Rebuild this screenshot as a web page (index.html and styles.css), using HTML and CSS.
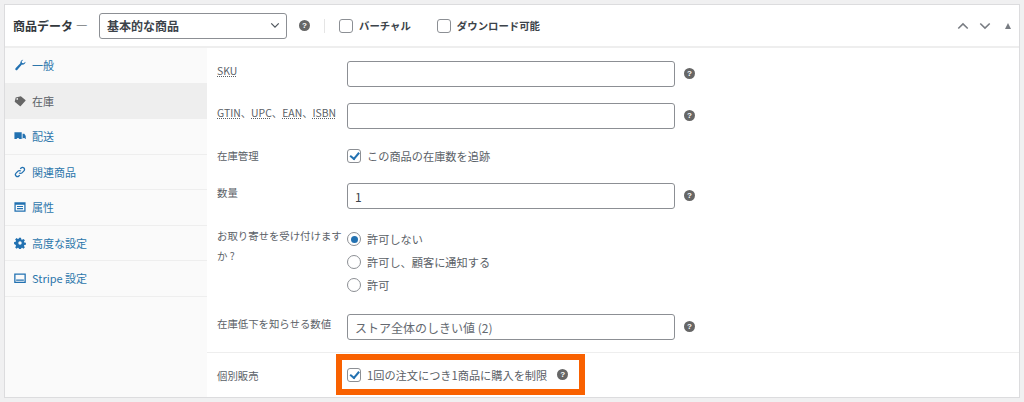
FILE: index.html
```html
<!DOCTYPE html>
<html lang="ja">
  <head>
    <meta charset="UTF-8" />
    <meta name="viewport" content="width=device-width, initial-scale=1.0" />
    <title>商品データ</title>
    <link rel="stylesheet" href="styles.css">
  </head>
  <body>
    <div class="card">
      <div class="card-header">
        <span class="card-title">商品データ —</span>
        <div class="type-select">
          <span>基本的な商品</span>
          <svg class="select-arrow" viewBox="0 0 12 8"><path d="M1.5 1.5 6 6l4.5-4.5" /></svg>
        </div>
        <span class="help"></span>
        <span class="header-sep"></span>
        <label class="header-check"><span class="box"></span>バーチャル</label>
        <label class="header-check"><span class="box"></span>ダウンロード可能</label>
        <div class="header-tools">
          <svg class="tool" viewBox="0 0 14 9"><path d="M1.5 7.5 7 2l5.5 5.5" /></svg>
          <svg class="tool" viewBox="0 0 14 9"><path d="M1.5 1.5 7 7l5.5-5.5" /></svg>
          <span class="tool-triangle"></span>
        </div>
      </div>

      <div class="card-body">
        <ul class="tabs">
          <li>
            <svg class="tab-icon" viewBox="0 0 14 14"><path d="M13.500 3.200a3.500 3.500 0 0 1-4.300 3.300L4 12.600a1.300 1.300 0 0 1-2.200-1.800L7.400 5.100A3.500 3.500 0 0 1 10.800 1L8.900 3l.5 1.700 1.700.4z" /></svg>
            一般
          </li>
          <li class="active">
            <svg class="tab-icon" viewBox="0 0 14 14"><path fill-rule="evenodd" d="M8 1.500 13.300 5.700a.8.8 0 0 1 .1 1.100L7.900 12.800a.8.8 0 0 1-1.100.1L.8 8 2 2.800zM3.800 3.600a1 1 0 1 0 0 2 1 1 0 0 0 0-2z" /></svg>
            在庫
          </li>
          <li>
            <svg class="tab-icon" viewBox="0 0 14 14"><path d="M.5 2.500h8.500v8H6.200a1.700 1.700 0 0 0-3.200 0H.5zM10 4.500h2l1.700 2.500v3.500h-.6a1.700 1.700 0 0 0-3.100-.3z" /></svg>
            配送
          </li>
          <li>
            <svg class="tab-icon icon-line" viewBox="0 0 14 14"><path d="M6 8a2.300 2.300 0 0 0 3.300 0l2.300-2.300a2.300 2.300 0 0 0-3.300-3.300L7.300 3.400M8 6a2.300 2.300 0 0 0-3.300 0L2.400 8.300a2.300 2.300 0 0 0 3.300 3.300l1-1" /></svg>
            関連商品
          </li>
          <li>
            <svg class="tab-icon" viewBox="0 0 14 14"><path fill-rule="evenodd" d="M.5 1.500h13v11H.5zM2 4.500v6.500h10V4.500zm1.500 1.200h7v1.300h-7zm0 2.500h7v1.300h-7z" /></svg>
            属性
          </li>
          <li>
            <svg class="tab-icon" viewBox="0 0 14 14"><path fill-rule="evenodd" d="M5.800 1h2.400l.3 1.900 1 .4 1.500-1.100 1.700 1.700-1.100 1.500.4 1 1.900.3v2.400l-1.900.3-.4 1 1.100 1.500-1.700 1.700-1.500-1.100-1 .4-.3 1.900H5.800l-.3-1.900-1-.4-1.500 1.100-1.700-1.700 1.100-1.500-.4-1L.1 8.200V5.800l1.900-.3.4-1-1.100-1.500 1.700-1.700 1.500 1.100 1-.4zM7 5a2 2 0 1 0 0 4 2 2 0 0 0 0-4z" /></svg>
            高度な設定
          </li>
          <li>
            <svg class="tab-icon icon-line icon-stripe" viewBox="0 0 14 14"><path d="M1 2.500h12v9.500H1zM2.500 9.500h9" /></svg>
            Stripe 設定
          </li>
        </ul>

        <div class="panel">
          <div class="field field-sku">
            <span class="field-label"><abbr>SKU</abbr></span>
            <div class="text-input"></div>
            <span class="help"></span>
          </div>
          <div class="field field-gtin">
            <span class="field-label"><abbr>GTIN</abbr>、<abbr>UPC</abbr>、<abbr>EAN</abbr>、<abbr>ISBN</abbr></span>
            <div class="text-input"></div>
            <span class="help"></span>
          </div>
          <div class="field field-manage">
            <span class="field-label">在庫管理</span>
            <label class="option"><span class="box checked"></span>この商品の在庫数を追跡</label>
          </div>
          <div class="field field-qty">
            <span class="field-label">数量</span>
            <div class="text-input">1</div>
            <span class="help"></span>
          </div>
          <div class="field field-backorder">
            <span class="field-label">お取り寄せを受け付けますか ?</span>
            <div class="radio-list">
              <label class="option"><span class="radio selected"></span>許可しない</label>
              <label class="option"><span class="radio"></span>許可し、顧客に通知する</label>
              <label class="option"><span class="radio"></span>許可</label>
            </div>
          </div>
          <div class="field field-threshold">
            <span class="field-label">在庫低下を知らせる数値</span>
            <div class="text-input placeholder">ストア全体のしきい値 (2)</div>
            <span class="help"></span>
          </div>
          <div class="field field-sold">
            <span class="field-label">個別販売</span>
            <div class="highlight">
              <label class="option"><span class="box checked"></span>1回の注文につき1商品に購入を制限</label>
              <span class="help"></span>
            </div>
          </div>
        </div>
      </div>
    </div>
  </body>
</html>
```

FILE: styles.css
```css
body {
  font-family: "Noto Sans CJK JP", "Noto Sans", sans-serif;
  background-color: #f0f0f1;
  color: #5b6167;
  margin: 0;
  padding: 4px;
  height: 394px;
  overflow: hidden;
}

.card {
  height: 394px;
  background-color: #fff;
  border: 1px solid #dcdcde;
  box-sizing: border-box;
  display: flex;
  flex-direction: column;
}

.card-header {
  height: 41px;
  flex: none;
  display: flex;
  align-items: center;
  padding: 0 8px;
  border-bottom: 2px solid #eee;
}

.card-title {
  font-size: 12px;
  font-weight: 700;
  color: #33383c;
  width: 86px;
  white-space: nowrap;
}

.type-select {
  width: 188px;
  height: 26px;
  box-sizing: border-box;
  border: 1px solid #8c8f94;
  border-radius: 3px;
  display: flex;
  align-items: center;
  justify-content: space-between;
  padding: 0 6px 0 7px;
  font-size: 12px;
  font-weight: 700;
  color: #3c434a;
  margin-right: 12px;
}

.select-arrow {
  width: 10px;
  height: 7px;
  fill: none;
  stroke: #50575e;
  stroke-width: 1.5;
}

.help {
  width: 11px;
  height: 11px;
  border-radius: 50%;
  background-color: #666;
  flex: none;
  display: inline-flex;
  align-items: center;
  justify-content: center;
  font-size: 8px;
  line-height: 1;
  font-weight: 700;
  color: #fff;
  font-family: "Liberation Sans", sans-serif;
}

.help::after {
  content: "?";
}

.header-sep {
  width: 1px;
  height: 14px;
  background-color: #e5e5e5;
  margin: 0 14px 0 14px;
}

.header-check {
  display: flex;
  align-items: center;
  font-size: 10.4px;
  font-weight: 700;
  color: #3c434a;
  margin-right: 26px;
}

.box,
.radio {
  width: 14px;
  height: 14px;
  flex: none;
  box-sizing: border-box;
  border: 1px solid #8c8f94;
  background-color: #fff;
  margin-right: 6px;
  display: inline-flex;
  align-items: center;
  justify-content: center;
}

.box {
  border-radius: 3px;
}

.box.checked::after {
  content: "";
  width: 7px;
  height: 3.5px;
  border-left: 2px solid #2271b1;
  border-bottom: 2px solid #2271b1;
  transform: translateY(-1px) rotate(-50deg);
}

.radio {
  border-radius: 50%;
}

.radio.selected::after {
  content: "";
  width: 7px;
  height: 7px;
  border-radius: 50%;
  background-color: #2271b1;
}

.header-tools {
  margin-left: auto;
  display: flex;
  align-items: center;
  gap: 10px;
}

.tool {
  width: 12px;
  height: 8px;
  fill: none;
  stroke: #787c82;
  stroke-width: 1.8;
}

.tool-triangle {
  width: 0;
  height: 0;
  border-left: 3.5px solid transparent;
  border-right: 3.5px solid transparent;
  border-bottom: 6px solid #787c82;
  margin-left: 4px;
}

.card-body {
  flex: 1;
  display: flex;
  min-height: 0;
}

.tabs {
  width: 202px;
  flex: none;
  background-color: #fafafa;
  list-style: none;
  margin: 0;
  padding: 0;
}

.tabs li {
  height: 35.5px;
  box-sizing: border-box;
  display: flex;
  align-items: center;
  padding-left: 9px;
  border-bottom: 1px solid #eee;
  font-size: 11px;
  color: #2c76ab;
}

.tabs li.active {
  background-color: #eee;
  color: #5b6167;
}

.tab-icon {
  width: 12px;
  height: 12px;
  flex: none;
  margin-right: 6px;
  fill: #2271b1;
}

.active .tab-icon {
  fill: #666;
}

.icon-line {
  fill: none;
  stroke: #2271b1;
  stroke-width: 1.5;
}

.panel {
  flex: 1;
  min-width: 0;
  display: flex;
  flex-direction: column;
  padding-left: 10px;
}

.field {
  display: flex;
  align-items: flex-start;
  font-size: 10.4px;
  flex: none;
  box-sizing: border-box;
}

.field-label {
  width: 130px;
  flex: none;
  line-height: 20px;
}

abbr {
  text-decoration: underline dotted;
}

.text-input {
  width: 328px;
  height: 26px;
  box-sizing: border-box;
  border: 1px solid #8c8f94;
  border-radius: 3px;
  background-color: #fff;
  display: flex;
  align-items: center;
  padding-left: 7px;
  font-size: 12px;
  color: #3c434a;
}

.text-input.placeholder {
  color: #646970;
}

.text-input + .help {
  margin: 7px 0 0 9px;
}

.option {
  display: flex;
  align-items: center;
  font-size: 11.2px;
}

.radio-list {
  display: flex;
  flex-direction: column;
  gap: 7px;
  margin-top: 5px;
}

.field-sku {
  height: 55px;
  padding-top: 13px;
}

.field-gtin {
  height: 42px;
}

.field-manage {
  height: 38px;
  padding-top: 3px;
}

.field-manage .field-label {
  margin-top: -2px;
}

.field-qty {
  height: 43px;
}

.field-backorder {
  height: 88px;
}

.field-threshold {
  height: 39px;
  border-bottom: 1px solid #eee;
  margin-left: -10px;
  padding-left: 10px;
}

.field-sold {
  align-items: center;
  height: 45px;
  padding-bottom: 2px;
}

.field-sold .field-label {
  margin-top: 3px;
}

.highlight {
  display: flex;
  align-items: center;
  margin-left: -11px;
  width: 249px;
  height: 41px;
  box-sizing: border-box;
  border: 6px solid #f96100;
  padding-left: 5px;
  background-color: #fff;
}

.highlight .help {
  margin-left: 10px;
}
```
